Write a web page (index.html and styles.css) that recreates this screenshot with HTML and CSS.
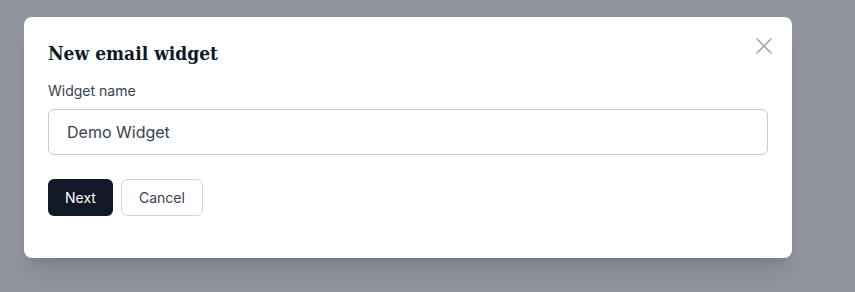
FILE: index.html
```html
<!DOCTYPE html>
<html lang="en">
<head>
    <meta charset="UTF-8">
    <meta name="viewport" content="width=device-width, initial-scale=1.0">
    <title>New email widget</title>
    <link rel="stylesheet" href="styles.css">
</head>
<body>
    <div class="overlay">
        <div class="modal">
            <button class="btn-close" aria-label="Close">
                <svg width="16" height="16" viewBox="0 0 16 16" fill="none" stroke="currentColor" stroke-width="1.5" stroke-linecap="round">
                    <path d="M1 1L15 15M15 1L1 15"/>
                </svg>
            </button>
            <h2>New email widget</h2>
            <div class="form-group">
                <label for="name">Widget name</label>
                <input type="text" id="name" value="Demo Widget">
            </div>
            <div class="button-group">
                <button class="btn btn-next">Next</button>
                <button class="btn btn-cancel">Cancel</button>
            </div>
        </div>
    </div>
</body>
</html>
```

FILE: styles.css
```css
body {
    margin: 0;
    font-family: Inter, "Noto Sans", sans-serif;
    background-color: #9095a0;
}
.overlay {
    padding: 17px 63px 35px 24px;
}
.modal {
    position: relative;
    background-color: white;
    border-radius: 8px;
    padding: 22px 24px 42px;
    box-shadow: 0 20px 25px -5px rgba(0,0,0,0.1), 0 8px 10px -6px rgba(0,0,0,0.1);
}
.btn-close {
    position: absolute;
    top: 21px;
    right: 20px;
    background: none;
    border: none;
    padding: 0;
    color: #9ca3af;
    cursor: pointer;
    display: flex;
}
h2 {
    margin: 0 0 14px;
    font-family: "DejaVu Serif Condensed", "DejaVu Serif", serif;
    font-stretch: condensed;
    font-size: 19px;
    line-height: 28px;
    color: #111827;
}
.form-group {
    margin-bottom: 24px;
}
label {
    display: block;
    margin-bottom: 8px;
    font-size: 14px;
    line-height: 20px;
    color: #374151;
}
input {
    width: 100%;
    height: 46px;
    padding: 0 18px;
    border: 1px solid #c8c9cc;
    border-radius: 6px;
    box-sizing: border-box;
    font-family: inherit;
    font-size: 16px;
    color: #374151;
}
.button-group {
    display: flex;
    gap: 8px;
}
.btn {
    height: 37px;
    padding: 0 17px;
    border-radius: 6px;
    font-family: inherit;
    font-size: 14px;
    cursor: pointer;
}
.btn-next {
    background-color: #111827;
    color: white;
    border: none;
}
.btn-cancel {
    background-color: white;
    color: #374151;
    border: 1px solid #d1d5db;
}
```
